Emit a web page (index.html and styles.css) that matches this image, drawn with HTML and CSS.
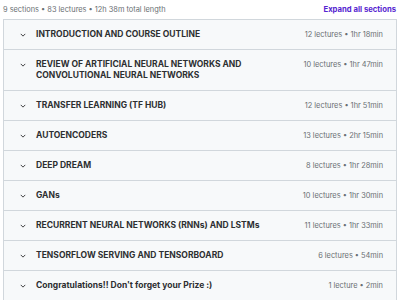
FILE: index.html
```html
<!DOCTYPE html>
<html lang="en">
<head>
    <meta charset="UTF-8">
    <title>Course content</title>
    <link rel="stylesheet" href="styles.css">
</head>
<body>
    <div class="content">
        <div class="summary">
            <span>9 sections • 83 lectures • 12h 38m total length</span>
            <a href="#" class="expand">Expand all sections</a>
        </div>
        <div class="sections">
            <div class="section">
                <span class="chev"><svg viewBox="0 0 8 5" width="6" height="4"><path d="M1 1l3 3 3-3" fill="none" stroke="#2d2f31" stroke-width="1.2"/></svg></span>
                <span class="title">INTRODUCTION AND COURSE OUTLINE</span>
                <span class="meta">12 lectures • 1hr 18min</span>
            </div>
            <div class="section">
                <span class="chev"><svg viewBox="0 0 8 5" width="6" height="4"><path d="M1 1l3 3 3-3" fill="none" stroke="#2d2f31" stroke-width="1.2"/></svg></span>
                <span class="title">REVIEW OF ARTIFICIAL NEURAL NETWORKS AND CONVOLUTIONAL NEURAL NETWORKS</span>
                <span class="meta">10 lectures • 1hr 47min</span>
            </div>
            <div class="section">
                <span class="chev"><svg viewBox="0 0 8 5" width="6" height="4"><path d="M1 1l3 3 3-3" fill="none" stroke="#2d2f31" stroke-width="1.2"/></svg></span>
                <span class="title">TRANSFER LEARNING (TF HUB)</span>
                <span class="meta">12 lectures • 1hr 51min</span>
            </div>
            <div class="section">
                <span class="chev"><svg viewBox="0 0 8 5" width="6" height="4"><path d="M1 1l3 3 3-3" fill="none" stroke="#2d2f31" stroke-width="1.2"/></svg></span>
                <span class="title">AUTOENCODERS</span>
                <span class="meta">13 lectures • 2hr 15min</span>
            </div>
            <div class="section">
                <span class="chev"><svg viewBox="0 0 8 5" width="6" height="4"><path d="M1 1l3 3 3-3" fill="none" stroke="#2d2f31" stroke-width="1.2"/></svg></span>
                <span class="title">DEEP DREAM</span>
                <span class="meta">8 lectures • 1hr 28min</span>
            </div>
            <div class="section">
                <span class="chev"><svg viewBox="0 0 8 5" width="6" height="4"><path d="M1 1l3 3 3-3" fill="none" stroke="#2d2f31" stroke-width="1.2"/></svg></span>
                <span class="title">GANs</span>
                <span class="meta">10 lectures • 1hr 30min</span>
            </div>
            <div class="section">
                <span class="chev"><svg viewBox="0 0 8 5" width="6" height="4"><path d="M1 1l3 3 3-3" fill="none" stroke="#2d2f31" stroke-width="1.2"/></svg></span>
                <span class="title">RECURRENT NEURAL NETWORKS (RNNs) AND LSTMs</span>
                <span class="meta">11 lectures • 1hr 33min</span>
            </div>
            <div class="section">
                <span class="chev"><svg viewBox="0 0 8 5" width="6" height="4"><path d="M1 1l3 3 3-3" fill="none" stroke="#2d2f31" stroke-width="1.2"/></svg></span>
                <span class="title">TENSORFLOW SERVING AND TENSORBOARD</span>
                <span class="meta">6 lectures • 54min</span>
            </div>
            <div class="section">
                <span class="chev"><svg viewBox="0 0 8 5" width="6" height="4"><path d="M1 1l3 3 3-3" fill="none" stroke="#2d2f31" stroke-width="1.2"/></svg></span>
                <span class="title">Congratulations!! Don't forget your Prize :)</span>
                <span class="meta">1 lecture • 2min</span>
            </div>
        </div>
    </div>
</body>
</html>
```

FILE: styles.css
```css
body {
    margin: 0;
    background-color: #fff;
    font-family: Inter, "Liberation Sans", sans-serif;
    color: #2d2f31;
}
.content {
    padding: 0 3px;
}
.summary {
    display: flex;
    justify-content: space-between;
    align-items: center;
    height: 19px;
    font-size: 7.4px;
    color: #6a6f73;
}
.expand {
    color: #5624d0;
    font-size: 7.7px;
    font-weight: 700;
    text-decoration: none;
    margin-right: 1px;
}
.sections {
    border: 1px solid #d1d7dc;
}
.section {
    display: flex;
    align-items: flex-start;
    padding: 9px 13px 9px 16px;
    background-color: #f7f9fa;
    border-top: 1px solid #d1d7dc;
}
.section:first-child {
    border-top: none;
}
.chev {
    display: flex;
    align-items: center;
    width: 16px;
    height: 11px;
    flex-shrink: 0;
}
.chev svg {
    display: block;
}
.title {
    flex: 1;
    font-size: 8.5px;
    font-weight: 700;
    line-height: 11px;
    padding-right: 30px;
}
.meta {
    font-size: 7.4px;
    color: #6a6f73;
    line-height: 11px;
    white-space: nowrap;
}
```
